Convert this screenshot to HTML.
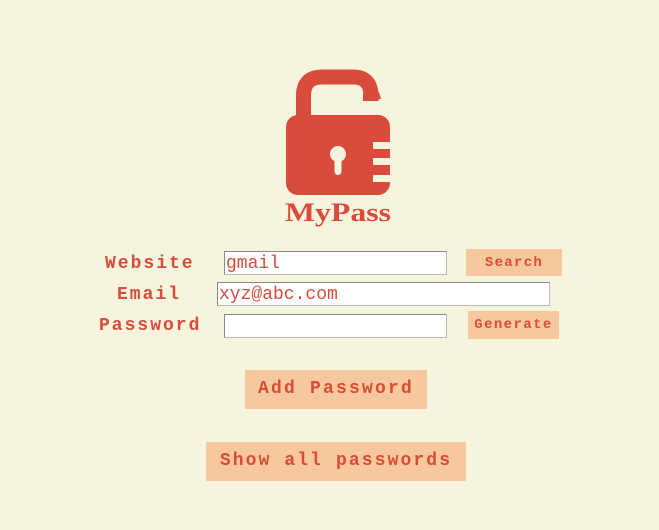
<!DOCTYPE html>
<html><head><style>
body{margin:0;width:659px;height:530px;background:#f7f4de;position:relative;overflow:hidden;font-family:"Liberation Mono",monospace;}
.a{position:absolute;}
.lbl{color:#d94b3b;font-weight:bold;font-size:18px;letter-spacing:2px;}
.in{background:#fff;border:1px solid #bbb;border-top-color:#888;border-left-color:#888;box-sizing:border-box;color:#d94b3b;font-size:18px;line-height:24px;padding-left:1px;}
.btn{background:#f6c89b;color:#d94b3b;font-weight:bold;text-align:center;}
</style></head><body>
<svg class="a" style="left:0;top:0" width="659" height="240">
<path d="M303.5 117 V96 Q303.5 77 322 77 H353 Q371 77 371 96 V101" fill="none" stroke="#d94b3b" stroke-width="15"/>
<path d="M363 101 L381 99 L379 92 L363 94Z" fill="#d94b3b"/>
<rect x="286" y="115" width="104" height="80" rx="12" fill="#d94b3b"/>
<rect x="373" y="142" width="19" height="7" fill="#f7f4de"/>
<rect x="373" y="158" width="19" height="7" fill="#f7f4de"/>
<rect x="373" y="175" width="19" height="7" fill="#f7f4de"/>
<circle cx="338" cy="154" r="8" fill="#f7f4de"/>
<rect x="334.5" y="156" width="7" height="19" rx="3.5" fill="#f7f4de"/>
<text x="285" y="221" textLength="106" lengthAdjust="spacingAndGlyphs" font-family="Liberation Serif,serif" font-weight="bold" font-size="26" fill="#d94b3b">MyPass</text>
</svg>
<div class="a lbl" style="left:105px;top:254px">Website</div>
<div class="a lbl" style="left:117px;top:285px">Email</div>
<div class="a lbl" style="left:99px;top:316px">Password</div>
<div class="a in" style="left:224px;top:251px;width:223px;height:24px">gmail</div>
<div class="a in" style="left:217px;top:282px;width:333px;height:24px">xyz@abc.com</div>
<div class="a in" style="left:224px;top:314px;width:223px;height:24px"></div>
<div class="a btn" style="left:466px;top:249px;width:96px;height:27px;line-height:28px;font-size:14px;letter-spacing:1.3px">Search</div>
<div class="a btn" style="left:468px;top:311px;width:91px;height:28px;line-height:28px;font-size:14px;letter-spacing:1.4px">Generate</div>
<div class="a btn" style="left:245px;top:370px;width:182px;height:39px;line-height:39px;font-size:18px;letter-spacing:2.2px">Add Password</div>
<div class="a btn" style="left:206px;top:442px;width:260px;height:39px;line-height:39px;font-size:18px;letter-spacing:2.1px">Show all passwords</div>
</body></html>
